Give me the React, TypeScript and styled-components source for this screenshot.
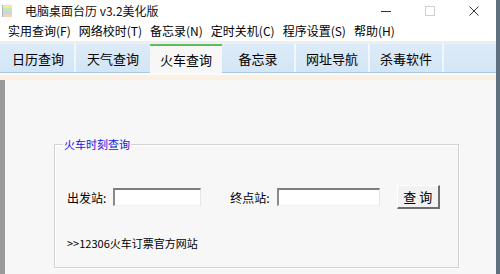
import React from "react";
import styled, { createGlobalStyle } from "styled-components";

const GlobalStyle = createGlobalStyle`
  html, body {
    margin: 0;
    padding: 0;
    background: #ffffff;
  }
  * {
    box-sizing: border-box;
  }
`;

const FONT = `"Noto Sans CJK SC", "Noto Sans", "Liberation Sans", sans-serif`;

const menus = ["实用查询(F)", "网络校时(T)", "备忘录(N)", "定时关机(C)", "程序设置(S)", "帮助(H)"];
const tabs = ["日历查询", "天气查询", "火车查询", "备忘录", "网址导航", "杀毒软件"];
const ACTIVE_TAB = 2;

const AppIcon = () => (
  <svg width="10" height="12" viewBox="0 0 10 12">
    <rect x="0" y="0" width="10" height="3" fill="#f3e6a0" />
    <rect x="0" y="3" width="10" height="3" fill="#c6e6b8" />
    <rect x="0" y="6" width="10" height="3" fill="#bcd9f2" />
    <rect x="0" y="9" width="10" height="3" fill="#f6d3b4" />
    <rect x="0" y="0" width="1" height="12" fill="#a8b4c0" />
  </svg>
);

export default function App() {
  return (
    <>
      <GlobalStyle />
      <S.Window>
        <S.TitleBar>
          <S.IconSlot>
            <AppIcon />
          </S.IconSlot>
          <S.Title>电脑桌面台历 v3.2美化版</S.Title>
          <S.Controls>
            <S.ControlButton>
              <svg width="10" height="10" viewBox="0 0 10 10">
                <line x1="0" y1="5.5" x2="10" y2="5.5" stroke="#333" strokeWidth="1" />
              </svg>
            </S.ControlButton>
            <S.ControlButton>
              <svg width="10" height="10" viewBox="0 0 10 10">
                <rect x="0.5" y="0.5" width="9" height="9" fill="none" stroke="#cfcfcf" strokeWidth="1" />
              </svg>
            </S.ControlButton>
            <S.ControlButton>
              <svg width="10" height="10" viewBox="0 0 10 10">
                <path d="M0.5 0.5 L9.5 9.5 M9.5 0.5 L0.5 9.5" stroke="#333" strokeWidth="1" />
              </svg>
            </S.ControlButton>
          </S.Controls>
        </S.TitleBar>

        <S.MenuBar>
          {menus.map((m) => (
            <S.MenuItem key={m}>{m}</S.MenuItem>
          ))}
        </S.MenuBar>
        <S.Band />

        <S.TabBar>
          {tabs.map((t, i) => (
            <S.Tab key={t} $active={i === ACTIVE_TAB} $plain={i !== ACTIVE_TAB && i !== ACTIVE_TAB - 1}>
              {t}
            </S.Tab>
          ))}
        </S.TabBar>
        <S.Divider />

        <S.Content>
          <S.Group>
            <S.Legend>火车时刻查询</S.Legend>
            <S.Row>
              <S.Label>出发站:</S.Label>
              <S.Input $width={88} />
              <S.Label $gap={29}>终点站:</S.Label>
              <S.Input $width={103} />
              <S.Button>查 询</S.Button>
            </S.Row>
            <S.Link>&gt;&gt;12306火车订票官方网站</S.Link>
          </S.Group>
        </S.Content>
      </S.Window>
    </>
  );
}

const S = {
  Window: styled.div`
    width: 500px;
    height: 274px;
    overflow: hidden;
    display: flex;
    flex-direction: column;
    background: #ffffff;
    border-right: 4px solid #5f7080;
    font-family: ${FONT};
    color: #000;
  `,
  TitleBar: styled.div`
    height: 21px;
    display: flex;
    align-items: center;
    background: #ffffff;
  `,
  IconSlot: styled.div`
    width: 25px;
    padding-left: 2px;
    display: flex;
    align-items: center;
  `,
  Title: styled.div`
    flex: 1;
    font-size: 12px;
    line-height: 21px;
    white-space: nowrap;
    color: #111;
  `,
  Controls: styled.div`
    display: flex;
    height: 21px;
  `,
  ControlButton: styled.div`
    width: 44px;
    display: flex;
    align-items: center;
    justify-content: center;
  `,
  MenuBar: styled.div`
    height: 20px;
    display: flex;
    align-items: center;
    padding-left: 4px;
    background: #ffffff;
  `,
  MenuItem: styled.div`
    padding: 0 4px;
    font-size: 12px;
    line-height: 20px;
    white-space: nowrap;
  `,
  Band: styled.div`
    height: 3px;
    background: #eeeeee;
  `,
  TabBar: styled.div`
    height: 29px;
    display: flex;
    align-items: stretch;
    padding-left: 2px;
    background: linear-gradient(#dcebf9, #d3e5f6);
    border-bottom: 1px solid #a9c8e4;
  `,
  Tab: styled.div<{ $active: boolean; $plain: boolean }>`
    width: ${(p) => (p.$active ? "72px" : "74px")};
    display: flex;
    align-items: center;
    justify-content: center;
    font-size: 13px;
    white-space: nowrap;
    background: ${(p) => (p.$active ? "#f7f7f7" : "transparent")};
    border-top: ${(p) => (p.$active ? "2px solid #5cbf5e" : "none")};
    margin-bottom: ${(p) => (p.$active ? "-1px" : "0")};
    border-right: ${(p) => (p.$plain ? "2px solid transparent" : "none")};
    border-image: ${(p) =>
      p.$plain ? "linear-gradient(to right, #b6c8da 50%, #f1f7fd 50%) 1 / 0 2px 0 0" : "none"};
  `,
  Divider: styled.div`
    height: 7px;
    background: linear-gradient(#fbfbfb 0 2px, #fcf0e2 2px);
  `,
  Content: styled.div`
    flex: 1;
    background: #f7f7f7;
    border-left: 5px solid transparent;
    border-image: linear-gradient(to right, #9a9a9a 0 1px, #7c7c7c 1px 4px, #ffffff 4px) 1 / 0 0 0 5px;
    padding: 64px 0 0 49px;
  `,
  Group: styled.div`
    position: relative;
    width: 405px;
    height: 124px;
    border: 1px solid #d2d2d2;
    box-shadow: inset 1px 1px 0 #ffffff, 1px 1px 0 #ffffff;
    padding: 40px 0 0 12px;
  `,
  Legend: styled.span`
    position: absolute;
    top: -8px;
    left: 8px;
    padding: 0 1px;
    background: #f7f7f7;
    color: #1414e6;
    font-size: 11px;
    line-height: 14px;
  `,
  Row: styled.div`
    display: flex;
    align-items: center;
    height: 24px;
  `,
  Label: styled.span<{ $gap?: number }>`
    font-size: 12px;
    margin-left: ${(p) => p.$gap ?? 0}px;
    margin-right: 7px;
    white-space: nowrap;
  `,
  Input: styled.div<{ $width: number }>`
    width: ${(p) => p.$width}px;
    height: 18px;
    background: #ffffff;
    border-top: 2px solid #7d7d7d;
    border-left: 2px solid #8a8a8a;
    border-bottom: 1px solid #f2f2f2;
    border-right: 1px solid #e6e6e6;
  `,
  Button: styled.div`
    width: 43px;
    height: 24px;
    margin-left: 17px;
    display: flex;
    align-items: center;
    justify-content: center;
    font-size: 13px;
    background: #f2f2f2;
    border-top: 1px solid #ffffff;
    border-left: 1px solid #ffffff;
    border-right: 2px solid #6e6e6e;
    border-bottom: 2px solid #6e6e6e;
  `,
  Link: styled.div`
    margin-top: 27px;
    font-size: 11px;
    line-height: 14px;
    white-space: nowrap;
  `,
};
